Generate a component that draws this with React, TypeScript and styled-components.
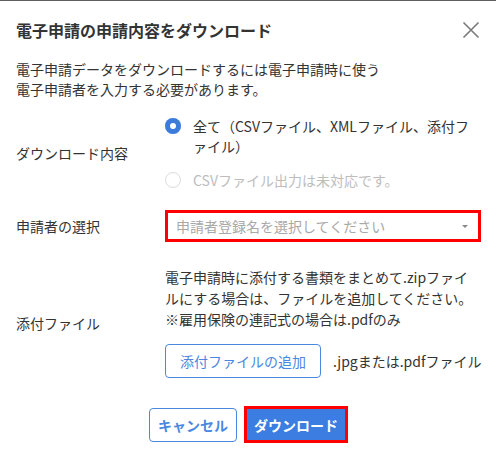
import React from "react";
import styled, { createGlobalStyle } from "styled-components";

const GlobalStyle = createGlobalStyle`
  html, body {
    margin: 0;
    padding: 0;
    background: #fff;
  }
  body {
    font-family: "Noto Sans CJK JP", "Noto Sans", sans-serif;
    color: #333;
    line-break: loose;
  }
`;

const Dialog = styled.div`
  width: 496px;
  height: 452px;
  box-sizing: border-box;
  border-top: 1px solid #5e5e5e;
  padding: 0 15px 0 16px;
  background: #fff;
`;

const Header = styled.div`
  display: flex;
  align-items: center;
  justify-content: space-between;
  height: 58px;
`;

const Title = styled.h1`
  margin: 0;
  font-size: 16px;
  font-weight: 700;
  line-height: 24px;
  color: #333;
`;

const CloseButton = styled.button`
  display: flex;
  align-items: center;
  justify-content: center;
  width: 24px;
  height: 24px;
  padding: 0;
  margin-right: -2px;
  border: none;
  background: none;
  color: #777;
`;

const Description = styled.p`
  margin: 0 0 17px;
  font-size: 14px;
  line-height: 20px;
`;

const FormRow = styled.div<{ $gap: number }>`
  display: grid;
  grid-template-columns: 149px 1fr;
  align-items: center;
  margin-bottom: ${(p) => p.$gap}px;
`;

const Label = styled.div`
  font-size: 14px;
  line-height: 20px;
`;

const RadioGroup = styled.div`
  display: flex;
  flex-direction: column;
  gap: 14px;
`;

const RadioOption = styled.label<{ $disabled?: boolean }>`
  display: flex;
  align-items: flex-start;
  gap: 12px;
  font-size: 14px;
  line-height: 20px;
  color: ${(p) => (p.$disabled ? "#bdbdbd" : "#333")};
`;

const RadioDot = styled.span<{ $checked?: boolean }>`
  flex: none;
  box-sizing: border-box;
  width: 16px;
  height: 16px;
  margin-top: 2px;
  border-radius: 50%;
  background: ${(p) => (p.$checked ? "#3b7bdc" : "#fff")};
  border: ${(p) => (p.$checked ? "none" : "1px solid #dcdcdc")};
  box-shadow: ${(p) =>
    p.$checked ? "inset 0 0 0 5px #3b7bdc, inset 0 0 0 8px #fff" : "none"};
`;

const Select = styled.div`
  display: flex;
  align-items: center;
  justify-content: space-between;
  height: 32px;
  box-sizing: border-box;
  padding: 0 10px 0 8px;
  border: 3px solid #ff0000;
  font-size: 14px;
  color: #a8a8a8;
`;

const Caret = styled.span`
  width: 0;
  height: 0;
  border-left: 3px solid transparent;
  border-right: 3px solid transparent;
  border-top: 3px solid #888;
`;

const AttachBox = styled.div`
  display: flex;
  flex-direction: column;
  gap: 14px;
`;

const AttachNote = styled.p`
  margin: 0;
  font-size: 14px;
  line-height: 21px;
`;

const AttachActions = styled.div`
  display: flex;
  align-items: center;
  gap: 12px;
  font-size: 14px;
  white-space: nowrap;
`;

const OutlineButton = styled.button<{ $bold?: boolean }>`
  flex: none;
  height: 34px;
  padding: 0 ${(p) => (p.$bold ? 8 : 14)}px;
  border: 1px solid #4a88e0;
  border-radius: 4px;
  background: #fff;
  color: #4a88e0;
  font-family: inherit;
  font-size: 14px;
  font-weight: ${(p) => (p.$bold ? 700 : 400)};
  white-space: nowrap;
`;

const Footer = styled.div`
  display: flex;
  justify-content: center;
  align-items: center;
  gap: 7px;
  margin-top: 28px;
`;

const PrimaryButton = styled.button`
  height: 37px;
  padding: 0 7px;
  border: 3px solid #ff0000;
  border-radius: 0;
  background: #3b7de0;
  color: #fff;
  font-family: inherit;
  font-size: 14px;
  font-weight: 700;
`;

export default function App() {
  return (
    <>
      <GlobalStyle />
      <Dialog>
        <Header>
          <Title>電子申請の申請内容をダウンロード</Title>
          <CloseButton aria-label="閉じる">
            <svg width="18" height="18" viewBox="0 0 18 18">
              <path d="M1.5 1.5 L16.5 16.5 M16.5 1.5 L1.5 16.5" stroke="#7a7a7a" strokeWidth="1.6" />
            </svg>
          </CloseButton>
        </Header>
        <Description>
          電子申請データをダウンロードするには電子申請時に使う
          <br />
          電子申請者を入力する必要があります。
        </Description>
        <FormRow $gap={20}>
          <Label>ダウンロード内容</Label>
          <RadioGroup>
            <RadioOption>
              <RadioDot $checked />
              <span>全て（CSVファイル、XMLファイル、添付ファイル）</span>
            </RadioOption>
            <RadioOption $disabled>
              <RadioDot />
              <span>CSVファイル出力は未対応です。</span>
            </RadioOption>
          </RadioGroup>
        </FormRow>
        <FormRow $gap={25}>
          <Label>申請者の選択</Label>
          <Select>
            <span>申請者登録名を選択してください</span>
            <Caret />
          </Select>
        </FormRow>
        <FormRow $gap={0}>
          <Label>添付ファイル</Label>
          <AttachBox>
            <AttachNote>
              電子申請時に添付する書類をまとめて.zipファイルにする場合は、ファイルを追加してください。
              <br />
              ※雇用保険の連記式の場合は.pdfのみ
            </AttachNote>
            <AttachActions>
              <OutlineButton>添付ファイルの追加</OutlineButton>
              <span>.jpgまたは.pdfファイル</span>
            </AttachActions>
          </AttachBox>
        </FormRow>
        <Footer>
          <OutlineButton $bold>キャンセル</OutlineButton>
          <PrimaryButton>ダウンロード</PrimaryButton>
        </Footer>
      </Dialog>
    </>
  );
}
